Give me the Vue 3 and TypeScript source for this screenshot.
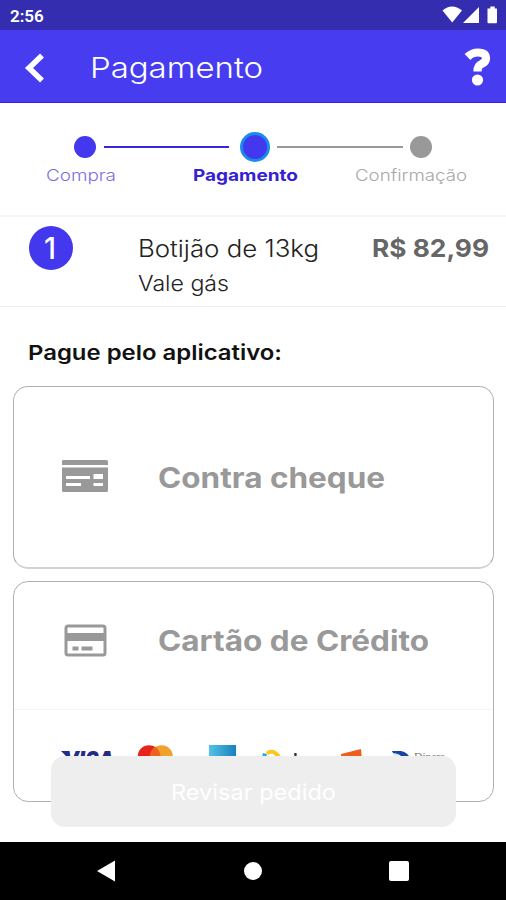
<script setup lang="ts">
import { h } from 'vue'

interface LabelProps {
  text: string
  width: number
  size: number
  weight: number
}

// One line of wide-set text, stretched to the given width; the baseline is the bottom of the box.
const Label = (props: LabelProps) =>
  h('svg', { class: 'label', width: props.width, height: Math.round(props.size * 0.73) }, [
    h(
      'text',
      {
        x: 0,
        y: Math.round(props.size * 0.73),
        'font-size': props.size,
        'font-weight': props.weight,
        textLength: props.width,
        lengthAdjust: 'spacingAndGlyphs',
      },
      props.text,
    ),
  ])
Label.props = ['text', 'width', 'size', 'weight']

const steps = [
  { name: 'Compra', state: 'done', width: 70, weight: 300 },
  { name: 'Pagamento', state: 'current', width: 105, weight: 700 },
  { name: 'Confirmação', state: 'next', width: 112, weight: 300 },
]
</script>

<template>
  <div class="screen">
    <div class="status">
      <span class="clock">2:56</span>
      <svg width="56" height="18" viewBox="0 0 56 18" fill="#fff">
        <path d="M0.500 4.600Q10 -3.400 20 4.600L10.200 16.500Z" />
        <path d="M37 1V17H21Z" />
        <path d="M48.300 0.500h4.400v2H55v14q0 .8-.8.8h-7.900q-.8 0-.8-.8v-14h2.800z" />
      </svg>
    </div>

    <header class="bar">
      <svg class="back" width="22" height="32" viewBox="0 0 22 32">
        <path d="M18 3.500L5 16L18 28.500" fill="none" stroke="#fff" stroke-width="5.600" stroke-linejoin="miter" />
      </svg>
      <Label text="Pagamento" :width="173" :size="29" :weight="300" />
      <svg class="help" width="28" height="40" viewBox="0 0 28 40">
        <path d="M3.500 11Q8 6.500 14 6.500Q22 6.500 22 12.500Q22 16 17.500 18Q13.500 19.500 13.500 25.500" fill="none" stroke="#fff" stroke-width="8.200" />
        <circle cx="13.500" cy="34" r="5.600" fill="#fff" />
      </svg>
    </header>

    <section class="steps">
      <div class="track">
        <i class="dot done"></i>
        <i class="line done"></i>
        <i class="dot current"></i>
        <i class="line"></i>
        <i class="dot"></i>
      </div>
      <div class="names">
        <Label v-for="s in steps" :key="s.name" :class="s.state" :text="s.name" :width="s.width" :size="16.5" :weight="s.weight" />
      </div>
    </section>

    <section class="order">
      <div class="count">
        <svg width="12" height="22" viewBox="0 0 12 22" class="label"><text x="-1" y="22" font-size="30" font-weight="500" textLength="12" lengthAdjust="spacingAndGlyphs">1</text></svg>
      </div>
      <div class="item">
        <Label text="Botijão de 13kg" :width="181" :size="23.5" :weight="300" />
        <Label text="Vale gás" :width="91" :size="21.5" :weight="300" />
      </div>
      <Label class="price" text="R$ 82,99" :width="117" :size="24.5" :weight="650" />
    </section>

    <main class="pay">
      <h2><Label text="Pague pelo aplicativo:" :width="254" :size="20.500" :weight="600" /></h2>

      <div class="card cheque">
        <svg class="icon" width="48" height="34" viewBox="0 0 48 34">
          <path fill="#999" d="M1 -1H44.500Q46 -1 46 .5V4H0V.5Q0 -1 1 -1ZM0 6.500H46V29.500Q46 31 44.500 31H1.500Q0 31 0 29.500Z" />
          <path fill="#fff" d="M4 15H28V18H4ZM4 22H19V25H4ZM31.500 13H41V18H31.500ZM31.500 22H41V25H31.500Z" />
        </svg>
        <Label text="Contra cheque" :width="227" :size="28" :weight="650" />
      </div>

      <div class="card credit">
        <div class="row">
          <svg class="icon" width="48" height="34" viewBox="0 0 48 34">
            <rect x="4" y="2" width="39" height="29" rx="2" fill="none" stroke="#999" stroke-width="3" />
            <path fill="#999" d="M4 9H44V17H4ZM10.500 22.500H16.500V26.500H10.500ZM19.500 22.500H30.500V26.500H19.500Z" />
          </svg>
          <Label text="Cartão de Crédito" :width="271" :size="28" :weight="650" />
        </div>
        <svg class="brands" width="400" height="36" viewBox="0 0 400 36">
          <defs>
            <linearGradient id="amex"><stop offset="0" stop-color="#55c3e7" /><stop offset="1" stop-color="#1681bd" /></linearGradient>
          </defs>
          <text class="visa" x="2" y="23" textLength="51" lengthAdjust="spacingAndGlyphs">VISA</text>
          <path d="M0 6H6L9 11H5Z" fill="#242c86" />
          <circle cx="88" cy="11.500" r="11.300" fill="#e8231b" />
          <circle cx="100.500" cy="11.500" r="11.300" fill="#f0a02b" />
          <path d="M94.250 2A11.300 11.300 0 0 1 94.250 21A11.300 11.300 0 0 1 94.250 2" fill="#ee6020" />
          <rect x="148" y="0" width="27" height="28" fill="url(#amex)" />
          <path d="M206 8.500Q212 3.500 218 12" fill="none" stroke="#fbc71b" stroke-width="4" />
          <path d="M202 8L206 9L204 16H200Z" fill="#35a5de" />
          <text class="elo" x="223" y="19.500" textLength="23" lengthAdjust="spacingAndGlyphs">elo</text>
          <path d="M280 9L300 4L302 26H281Z" fill="#ed5e1c" />
          <path d="M331 6H340Q347 7 350 15V25H341Z" fill="#1945a0" />
          <path d="M331 8Q340 8 343 15L338 20Z" fill="#d9eefb" />
          <text class="diners" x="353" y="15" textLength="31" lengthAdjust="spacingAndGlyphs">Diners</text>
        </svg>
      </div>
      <button class="review" type="button"><Label text="Revisar pedido" :width="165" :size="21.500" :weight="400" /></button>
    </main>

    <nav class="android">
      <svg width="20" height="22" viewBox="0 0 20 22"><path d="M1 11L19 .5V21.500Z" fill="#fff" /></svg>
      <i class="home"></i>
      <i class="recent"></i>
    </nav>
  </div>
</template>

<style>
body { margin: 0; background: #fff; }
</style>

<style scoped>
.screen {
  width: 506px; height: 900px; overflow: hidden;
  display: flex; flex-direction: column;
  background: #fff; color: #222;
  font-family: Inter, "Open Sans", sans-serif;
}
svg { display: block; flex: none; }
.label, .icon { overflow: visible; }
.label { fill: currentColor; }
.status {
  height: 30px; box-sizing: border-box; padding: 6px 8px 0 10px;
  display: flex; justify-content: space-between;
  background: #352db0; color: #fff;
}
.clock { font: 600 17px/20px Roboto, sans-serif; }
.bar {
  height: 73px; box-sizing: border-box; border-bottom: 1px solid #3523d8;
  display: flex; align-items: flex-start; background: #483cf0; color: #fff;
}
.back { margin: 22px 44px 0 24px; }
.bar .label { margin-top: 27px; }
.help { margin: 16px 14px 0 auto; }
.steps { height: 112px; border-bottom: 2px solid #f6f6f6; }
.track { display: flex; align-items: center; height: 30px; padding: 29px 74px 0; }
.dot { width: 22px; height: 22px; border-radius: 50%; background: #999; flex: none; }
.dot.done { background: #4338ed; }
.dot.current {
  width: 30px; height: 30px; box-sizing: border-box;
  border: 3px solid #168ced; background: #4338ed;
}
.line { flex: 1; height: 2px; margin: 0 7px; background: #999; }
.line.done { flex: none; width: 125px; background: #3825df; margin: 0 11px 0 8px; }
.names { display: flex; padding: 7px 39px 0 46px; justify-content: flex-start; }
.names .done { color: #7c6fe2; }
.names .current { color: #3521d4; margin-left: 77px; }
.names .next { color: #a8a8a8; margin-left: auto; }
.order {
  height: 89px; border-bottom: 1px solid #eee;
  display: flex; align-items: flex-start; padding: 0 17px 0 29px;
}
.count {
  width: 44px; height: 44px; border-radius: 50%; margin-top: 9px;
  display: flex; align-items: center; justify-content: center;
  background: #4338ed; color: #fff;
}
.item { margin: 23px 0 0 65px; display: grid; gap: 18px; }
.price { margin: 22px 0 0 auto; color: #666; }
.pay { position: relative; padding: 38px 12px 0 13px; height: 497px; }
h2 { margin: 0 0 26px 15px; color: #111; }
.card { box-sizing: border-box; border: 1px solid #b0b0b0; border-radius: 15px; color: #999; }
.cheque { height: 183px; margin-bottom: 12px; padding: 1px 48px 0; display: flex; align-items: center; gap: 48px; border-bottom: 2px solid #d2d2d2; }
.credit { height: 221px; padding: 0; }
.row { height: 128px; box-sizing: border-box; padding: 0 48px 10px; display: flex; align-items: center; gap: 48px; border-bottom: 1px solid #f4f4f4; }
.brands { margin: 35px 0 0 47px; }
.visa { font: italic 900 23px Inter, sans-serif; fill: #242c86; }
.elo { font: 700 16px Inter, sans-serif; fill: #333; }
.diners { font: 500 10px "Liberation Serif", serif; fill: #777; }
.review {
  position: absolute; left: 51px; top: 449px; width: 405px; height: 71px;
  display: flex; align-items: center; justify-content: center;
  border: 0; border-radius: 14px; padding: 0; background: #eee; color: #fff;
  font-family: inherit;
}
.android {
  margin-top: auto; height: 58px; box-sizing: border-box; background: #000;
  display: flex; align-items: center; justify-content: space-between; padding: 0 97px 0 96px;
}
.home { width: 18px; height: 18px; border-radius: 50%; background: #fff; margin-left: 1px; }
.recent { width: 20px; height: 20px; border-radius: 2px; background: #fff; }
</style>
